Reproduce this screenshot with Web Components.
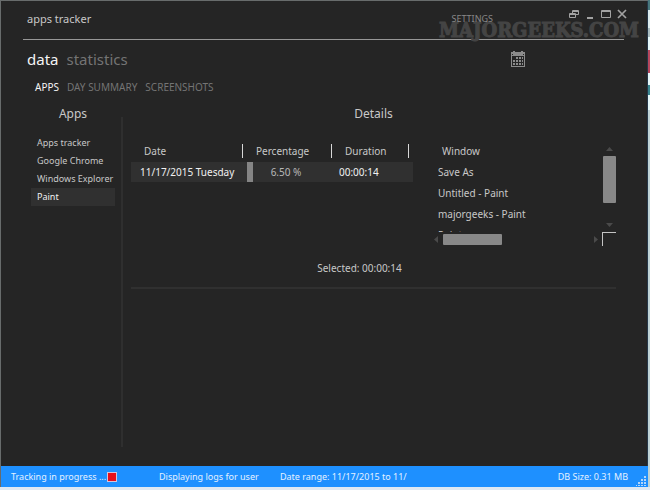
<!DOCTYPE html>
<html lang="en">
<head>
<meta charset="utf-8">
<title>apps tracker</title>
<style>
  html, body { margin: 0; height: 100%; }
  body { background: #dfe9f3; font: 10px/20px "Noto Sans", "Open Sans", sans-serif; color: #c8c8c8; overflow: hidden; }
</style>
</head>
<body>
<desktop-frame>
  <app-window>
    <title-bar slot="title" heading="apps tracker"></title-bar>
    <main-nav slot="nav"></main-nav>
    <sub-nav slot="nav"></sub-nav>
    <app-list slot="side" heading="Apps">
      <app-item>Apps tracker</app-item>
      <app-item>Google Chrome</app-item>
      <app-item>Windows Explorer</app-item>
      <app-item selected>Paint</app-item>
    </app-list>
    <details-pane slot="details" heading="Details">
      <usage-table></usage-table>
      <window-list></window-list>
      <span slot="summary">Selected: 00:00:14</span>
    </details-pane>
    <status-bar slot="status">
      <span slot="tracking">Tracking in progress ...</span>
      <span slot="user">Displaying logs for user</span>
      <span slot="range">Date range: 11/17/2015 to 11/</span>
      <span slot="size">DB Size: 0.31 MB</span>
    </status-bar>
  </app-window>
</desktop-frame>

<script>
  const reset = `
    * { box-sizing: border-box; }
    button { appearance: none; border: 0; margin: 0; padding: 0; background: none; font: inherit; color: inherit; text-align: left; }
    h1, h2 { margin: 0; font-weight: 400; }
    svg { display: block; }
  `;
  function define(name, css, html) {
    customElements.define(name, class extends HTMLElement {
      constructor() {
        super();
        const root = this.attachShadow({ mode: 'open' });
        const t = document.createElement('template');
        t.innerHTML = `<style>${reset}${css}</style>${html}`;
        root.append(t.content.cloneNode(true));
      }
      connectedCallback() {
        const h = this.shadowRoot.querySelector('[data-heading]');
        if (h) h.textContent = this.getAttribute('heading');
      }
    });
  }

  define('desktop-frame', `
    :host { display: grid; grid-template-columns: minmax(0, 1fr) 2px; grid-template-rows: minmax(0, 1fr) 3px; height: 100vh; }
    .edge { background: linear-gradient(#47777d 10px, #dcecee 10px 28px, #a9bcc0 28px 37px, #e6f8fa 37px 50px, #b8485e 50px 73px, #e6f8fa 73px 85px, #3b8790 85px 95px, #e6f8fa 95px 110px, #bfd3d6 110px); }
  `, `<slot></slot><div class="edge"></div>`);

  define('app-window', `
    :host { display: flex; flex-direction: column; min-height: 0; background: #252525; border: solid #686c6c; border-width: 1px 0 0 1px; box-shadow: inset -1px 0 #26384a; }
    .body { flex: 1; min-height: 0; display: grid; grid-template-columns: 90px 2px minmax(0, 1fr); padding: 0 32px 0 30px; }
    .rule { background: #2f2f2f; margin: 21px 0 19px; }
  `, `<slot name="title"></slot><slot name="nav"></slot>
      <div class="body"><slot name="side"></slot><div class="rule"></div><slot name="details"></slot></div>
      <slot name="status"></slot>`);

  define('title-bar', `
    :host { display: block; position: relative; margin: 0 24px 0 22px; height: 38px; border-bottom: 1px solid #979797; }
    header { position: relative; display: flex; align-items: flex-start; margin-right: -4px; padding-left: 4px; }
    h1 { flex: 1; font-size: 11px; line-height: 20px; padding-top: 8px; }
    .settings { font-size: 9px; line-height: 20px; margin-top: 8px; color: #888; }
    .tools { display: flex; gap: 4px; margin: 7px 0 0 75px; color: #a2a2a2; }
    .tools button { width: 12px; height: 12px; }
    .mark { position: absolute; right: -15px; top: 19px; font: 700 20px/20px "DejaVu Serif Condensed", "DejaVu Serif", serif; color: #444; -webkit-text-stroke: 1px #444; white-space: nowrap; pointer-events: none; }
  `, `<span class="mark">MAJORGEEKS.COM</span>
    <header>
      <h1 data-heading></h1>
      <button class="settings">SETTINGS</button>
      <span class="tools">
        <button aria-label="Windows"><svg width="12" height="12" fill="none" stroke="currentColor"><path d="M1.500 5.500h6v4h-6zM1 6.500h7M4.500 5V2.500h6v4H8M4 3.500h7"/></svg></button>
        <button aria-label="Minimize"><svg width="12" height="12"><path d="M3 9h6v2H3z" fill="currentColor"/></svg></button>
        <button aria-label="Maximize"><svg width="12" height="12" fill="none" stroke="currentColor"><path d="M1.500 2.500h9v7h-9zM1 3.500h10"/></svg></button>
        <button aria-label="Close"><svg width="12" height="12" fill="none" stroke="currentColor" stroke-width="1.700"><path d="M2 2l8 8M10 2l-8 8"/></svg></button>
      </span>
    </header>`);

  define('main-nav', `
    :host { display: block; }
    nav { display: flex; gap: 8px; align-items: center; height: 38px; padding: 0 122px 0 26px; font-size: 15px; line-height: 20px; color: #747474; }
    .on { color: #f4f4f4; }
    .cal { margin-left: auto; color: #8b8b8b; }
  `, `<nav><button class="on">data</button><button>statistics</button>
      <button class="cal" aria-label="Pick dates"><svg width="16" height="16" viewBox="0 0 16 16">
        <path fill="currentColor" fill-rule="evenodd" d="M3 0h2v1h6V0h2v1h2v15H1V1h2zM2 5v10h12V5z"/>
        <path fill="#252525" d="M2 3h1v1H2zM13 3h1v1h-1z"/>
        <path fill="currentColor" d="M6 6h2v2H6zM9 6h2v2H9zM12 6h1v2h-1zM3 9h2v2H3zM6 9h2v2H6zM9 9h2v2H9zM12 9h1v2h-1zM3 12h2v2H3zM6 12h2v2H6zM9 12h2v2H9zM12 12h1v2h-1z"/>
      </svg></button></nav>`);

  define('sub-nav', `
    :host { display: block; }
    nav { display: flex; gap: 8px; padding-left: 34px; height: 18px; color: #747474; line-height: 18px; }
    .on { color: #f4f4f4; }
  `, `<nav><button class="on">APPS</button><button>DAY SUMMARY</button><button>SCREENSHOTS</button></nav>`);

  define('app-list', `
    :host { display: block; }
    h2 { font-size: 12px; line-height: 20px; text-align: center; padding: 8px 6px 10px 0; }
    .items { display: flex; flex-direction: column; padding-right: 6px; }
  `, `<h2 data-heading></h2><div class="items"><slot></slot></div>`);

  define('app-item', `
    :host { display: block; font-size: 9px; line-height: 18px; }
    :host([selected]) { background: #303030; color: #f0f0f0; }
    button { display: block; width: 100%; padding-left: 6px; white-space: nowrap; }
  `, `<button><slot></slot></button>`);

  define('details-pane', `
    :host { display: block; padding-left: 8px; }
    h2 { font-size: 12px; line-height: 20px; text-align: center; padding-top: 8px; }
    .cols { display: grid; grid-template-columns: minmax(0, 282fr) minmax(0, 182fr); gap: 21px; height: 132px; padding-top: 17px; }
    .summary { text-align: center; padding: 2px 28px 9px 0; }
    .rule { height: 2px; background: #303030; }
  `, `<h2 data-heading></h2><div class="cols"><slot></slot></div>
      <div class="summary"><slot name="summary"></slot></div><div class="rule"></div>`);

  define('usage-table', `
    :host { display: block; }
    table { width: 100%; table-layout: fixed; border-collapse: collapse; white-space: nowrap; }
    th, td { height: 20px; padding: 0; font-weight: 400; text-align: left; line-height: 20px; }
    th { height: 21px; padding-bottom: 2px; }
    .c1 { width: 112px; } .c2 { width: 89px; } .c3 { width: 77px; }
    th div { line-height: 14px; border-right: 1px solid #d8d8d8; padding-left: 13px; }
    tbody { background: #303030; color: #f0f0f0; }
    td.date { padding-left: 9px; }
    td.time { padding-left: 7px; }
    .meter { margin: 0 1px 0 4px; text-align: center; color: #b8b8b8; padding-right: 6px; background: linear-gradient(#858585, #858585) left / 6px 100% no-repeat; }
  `, `<table><colgroup><col class="c1"><col class="c2"><col class="c3"><col></colgroup>
      <thead><tr><th scope="col"><div>Date</div></th><th scope="col"><div>Percentage</div></th><th scope="col"><div>Duration</div></th><td></td></tr></thead>
      <tbody><tr><td class="date">11/17/2015 Tuesday</td><td><div class="meter">6.50 %</div></td><td class="time">00:00:14</td><td></td></tr></tbody></table>`);

  define('window-list', `
    :host { display: grid; grid-template-columns: minmax(0, 1fr) 14px; grid-template-rows: 91px 14px; column-gap: 4px; }
    .view { overflow: hidden; }
    table { border-collapse: collapse; white-space: nowrap; }
    th, td { padding: 0 0 1px 4px; font-weight: 400; text-align: left; line-height: 20px; }
    th { padding-left: 8px; }
    .v { display: flex; flex-direction: column; align-items: center; padding: 6px 0 5px; }
    .v .thumb { width: 13px; height: 47px; margin-top: 5px; }
    .h { display: flex; align-items: center; }
    .h .thumb { width: 59px; height: 11px; margin-left: 5px; }
    .thumb { background: #888; border-radius: 1px; }
    .end { margin-left: auto; }
    .v .end { margin: auto 0 0; }
    svg { fill: #4a4a4a; }
    .corner { border: solid #c4c4c4; border-width: 1px 0 0 1px; }
  `, `<div class="view"><table><thead><tr><th scope="col">Window</th></tr></thead>
        <tbody><tr><td>Save As</td></tr><tr><td>Untitled - Paint</td></tr><tr><td>majorgeeks - Paint</td></tr><tr><td>Paint</td></tr></tbody></table></div>
      <div class="v"><svg width="7" height="4"><path d="M0 4l3.500-4L7 4z"/></svg><div class="thumb"></div><svg class="end" width="7" height="4"><path d="M0 0h7L3.500 4z"/></svg></div>
      <div class="h"><svg width="4" height="7"><path d="M4 0v7L0 3.500z"/></svg><div class="thumb"></div><svg class="end" width="4" height="7"><path d="M0 0l4 3.500L0 7z"/></svg></div>
      <div class="corner"></div>`);

  define('status-bar', `
    :host { display: block; background: #1e90ff; color: #e4f1ff; font-size: 9px; line-height: 21px; white-space: nowrap; }
    footer { display: flex; align-items: center; height: 21px; padding: 0 2px 0 10px; }
    .tracking { display: flex; align-items: center; gap: 2px; width: 148px; }
    .stop { width: 8px; height: 8px; background: #e8101c; outline: 1px solid #d3c4dc; }
    .user { width: 121px; }
    .size { margin-left: auto; margin-right: 8px; }
    svg { align-self: flex-end; margin-bottom: 1px; fill: #b4d6fa; }
  `, `<footer><div class="tracking"><slot name="tracking"></slot><i class="stop"></i></div>
      <div class="user"><slot name="user"></slot></div><div><slot name="range"></slot></div>
      <div class="size"><slot name="size"></slot></div>
      <svg width="10" height="10"><path d="M8 0h2v2H8zM5 3h2v2H5zM8 3h2v2H8zM5 6h2v2H5zM8 6h2v2H8zM2 6h2v2H2zM0 9h1v1H0zM2 9h2v1H2zM5 9h2v1H5zM8 9h2v1H8z"/></svg></footer>`);
</script>
</body>
</html>
